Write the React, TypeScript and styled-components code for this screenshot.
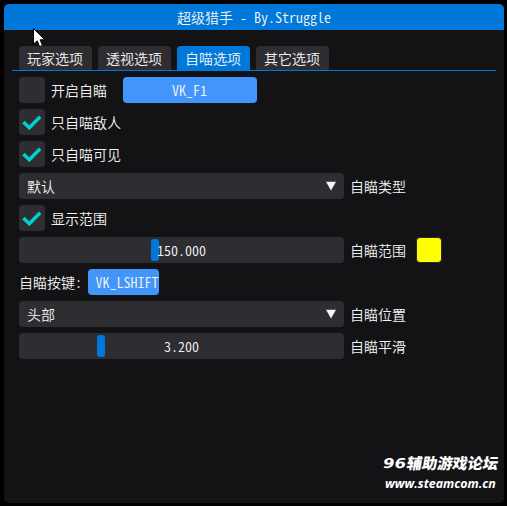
import type { ReactNode } from "react";
import styled, { createGlobalStyle, css } from "styled-components";

const colors = {
	window: "#131315",
	frame: "#2e2e32",
	accent: "#0078d9",
	button: "#4296fa",
	check: "#00d0cb",
	text: "#f4f4f4",
};

const GlobalStyle = createGlobalStyle`
	* {
		box-sizing: border-box;
	}

	body {
		margin: 0;
		background: #000;
		overflow: hidden;
	}
`;

// "hwid" sets latin in half-em cells, so two letters fill one CJK glyph.
const Screen = styled.div`
	position: relative;
	width: 507px;
	height: 506px;
	padding: 4px 3px 3px 4px;
	background: #000;
	color: ${colors.text};
	font-family: "Noto Sans CJK SC", sans-serif;
	font-feature-settings: "hwid";
	font-size: 14px;
	font-weight: 350;
	line-height: 24px;
	white-space: pre;
	user-select: none;
`;

const Window = styled.div`
	display: flex;
	flex-direction: column;
	height: 499px;
	width: 500px;
	border-radius: 5px;
	overflow: hidden;
	background: ${colors.window};
`;

const TitleBar = styled.div`
	display: flex;
	justify-content: center;
	height: 26px;
	flex: none;
	padding-top: 1px;
	background: ${colors.accent};
`;

const TabBar = styled.div`
	display: flex;
	gap: 6px;
	margin: 16px 8px 0;
	padding-left: 7px;
	border-bottom: 1px solid ${colors.accent};
`;

const Tab = styled.div<{ $active?: boolean }>`
	width: 73px;
	height: 24px;
	padding-left: 8px;
	border-radius: 4px 4px 0 0;
	background: ${({ $active }) => ($active ? colors.accent : colors.frame)};
`;

const Content = styled.div`
	display: flex;
	flex-direction: column;
	gap: 6px;
	padding: 6px 15px;
`;

const Row = styled.div`
	display: flex;
	height: 26px;
	gap: 6px;
`;

const Label = styled.span`
	padding-top: 1px;
	height: 26px;
`;

const frame = css`
	height: 26px;
	padding-top: 1px;
	border-radius: 4px;
	background: ${colors.frame};
`;

const CheckFrame = styled.div`
	${frame}
	width: 26px;
	flex: none;
`;

const ComboFrame = styled.div`
	${frame}
	display: flex;
	justify-content: space-between;
	width: 325px;
	padding: 1px 8px 0;

	svg {
		margin-top: 7px;
	}
`;

const SliderFrame = styled.div`
	${frame}
	position: relative;
	width: 325px;
	text-align: center;
`;

const SliderValue = styled.span`
	position: relative;
`;

const Grab = styled.div`
	position: absolute;
	top: 2px;
	width: 8px;
	height: 22px;
	border-radius: 3px;
	background: ${colors.accent};
`;

const KeyButton = styled.div<{ $width: number; $indent: number; $gap?: number }>`
	width: ${({ $width }) => $width}px;
	height: 26px;
	margin-left: ${({ $gap }) => $gap ?? 0}px;
	padding: 1px 0 0 ${({ $indent }) => $indent}px;
	border-radius: 4px;
	background: ${colors.button};
`;

const Swatch = styled.div`
	width: 26px;
	height: 26px;
	margin-left: 4px;
	border: 1px solid #29292c;
	border-radius: 4px;
	background: #ffff00;
`;

const Pointer = styled.svg`
	position: absolute;
	left: 33px;
	top: 28px;
`;

const Watermark = styled.div`
	position: absolute;
	left: 383px;
	top: 453px;
	color: #fff;
	font-feature-settings: normal;
`;

const SiteName = styled.div`
	display: flex;
	height: 21px;
	line-height: 19px;
	font-size: 15.2px;
	font-weight: 900;
	transform: skewX(-10deg);
`;

const SiteDigits = styled.span`
	display: inline-block;
	width: 24px;
	font-family: "DejaVu Sans", sans-serif;
	font-size: 13.5px;
	font-weight: 700;
	line-height: 20px;
	transform: scaleX(1.22);
	transform-origin: 0 0;
`;

const SiteUrl = styled.div`
	height: 20px;
	padding-left: 2px;
	line-height: 20px;
	font-family: "Open Sans", sans-serif;
	font-size: 12.4px;
	font-style: italic;
	font-weight: 700;
`;

const Checkbox = ({ checked, children }: { checked?: boolean; children: ReactNode }) => (
	<>
		<CheckFrame>
			{checked && (
				<svg width="26" height="26" viewBox="0 0 26 26">
					<path
						d="M4.4 11.9 L10.3 17.7 L21.2 6.8"
						fill="none"
						stroke={colors.check}
						strokeWidth="3.5"
					/>
				</svg>
			)}
		</CheckFrame>
		<Label>{children}</Label>
	</>
);

const Combo = ({ value }: { value: string }) => (
	<ComboFrame>
		{value}
		<svg width="10" height="10" viewBox="0 0 10 10">
			<path d="M0 0.8 H10 L5 9.4 Z" fill={colors.text} />
		</svg>
	</ComboFrame>
);

const Slider = ({ value, offset }: { value: string; offset: number }) => (
	<SliderFrame>
		<Grab style={{ left: offset }} />
		<SliderValue>{value}</SliderValue>
	</SliderFrame>
);

const tabs = ["玩家选项", "透视选项", "自喵选项", "其它选项"];

const App = () => (
	<Screen>
		<GlobalStyle />
		<Window>
			<TitleBar>超级猎手 - By.Struggle</TitleBar>
			<TabBar>
				{tabs.map((tab, i) => (
					<Tab key={tab} $active={i === 2}>
						{tab}
					</Tab>
				))}
			</TabBar>
			<Content>
				<Row>
					<Checkbox>开启自瞄</Checkbox>
					<KeyButton $width={134} $indent={49} $gap={10}>
						VK_F1
					</KeyButton>
				</Row>
				<Row>
					<Checkbox checked>只自喵敌人</Checkbox>
				</Row>
				<Row>
					<Checkbox checked>只自喵可见</Checkbox>
				</Row>
				<Row>
					<Combo value="默认" />
					<Label>自瞄类型</Label>
				</Row>
				<Row>
					<Checkbox checked>显示范围</Checkbox>
				</Row>
				<Row>
					<Slider value="150.000" offset={132} />
					<Label>自瞄范围</Label>
					<Swatch />
				</Row>
				<Row>
					<Label>自瞄按键:</Label>
					<KeyButton $width={71} $indent={7.5}>
						VK_LSHIFT
					</KeyButton>
				</Row>
				<Row>
					<Combo value="头部" />
					<Label>自瞄位置</Label>
				</Row>
				<Row>
					<Slider value="3.200" offset={78} />
					<Label>自瞄平滑</Label>
				</Row>
			</Content>
		</Window>
		<Watermark>
			<SiteName>
				<SiteDigits>96</SiteDigits>辅助游戏论坛
			</SiteName>
			<SiteUrl>www.steamcom.cn</SiteUrl>
		</Watermark>
		<Pointer width="13" height="20" viewBox="0 0 13 20">
			<path
				d="M0.5 0.5 V16.2 L4.2 12.8 L6.6 18.6 L9.5 17.4 L7.1 11.8 H11.8 Z"
				fill="#fff"
				stroke="#000"
				strokeWidth="1"
			/>
		</Pointer>
	</Screen>
);

export default App;
